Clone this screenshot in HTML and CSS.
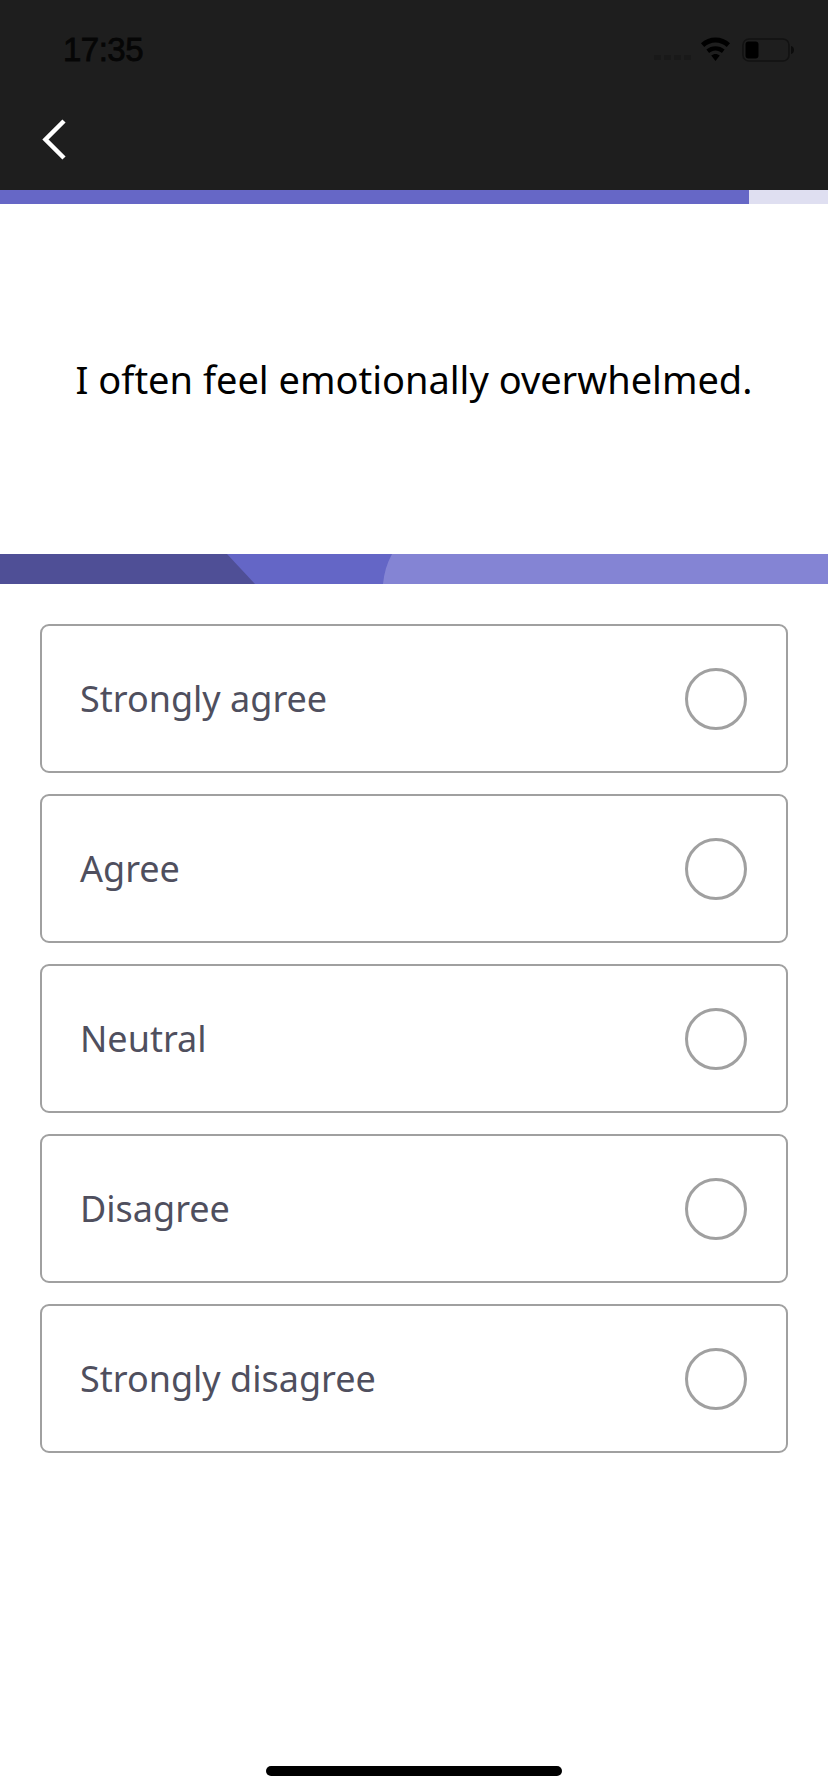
FILE: index.html
```html
<!DOCTYPE html>
<html lang="en">
<head>
<meta charset="utf-8">
<title>Question</title>
<link rel="stylesheet" href="styles.css">
</head>
<body>
<div class="page">
  <header class="header">
    <div class="status">
      <span class="time">17:35</span>
      <div class="status-icons">
        <div class="signal"><i></i><i></i><i></i><i></i></div>
        <svg class="wifi" width="31" height="24" viewBox="0 0 32 24" preserveAspectRatio="none"><path d="M16 24 L11.6 18.6 C14 16.4 18 16.4 20.4 18.6 Z M9.4 16 L6.6 12.6 C11.6 8 20.4 8 25.4 12.6 L22.6 16 C18.8 12.6 13.2 12.6 9.4 16 Z M4.4 10 L1 6.2 C9 -1.4 23 -1.4 31 6.2 L27.6 10 C21 4 11 4 4.4 10 Z" fill="#000"/></svg>
        <svg class="battery" width="52" height="24" viewBox="0 0 52 24"><rect x="1" y="1" width="46" height="22" rx="6" fill="none" stroke="#121212" stroke-width="1.6"/><rect x="3.5" y="3.5" width="13" height="17" rx="3" fill="#000"/><path d="M49 8 C51 8.6 52 10 52 12 C52 14 51 15.4 49 16 Z" fill="#0c0c0c"/></svg>
      </div>
    </div>
    <div class="nav">
      <svg class="back" width="26" height="42" viewBox="0 0 26 42"><path d="M22 2 L3.5 20.5 L22 39" fill="none" stroke="#fff" stroke-width="4.5"/></svg>
    </div>
  </header>
  <div class="progress"><div class="progress-fill"></div></div>
  <section class="question">
    <p class="question-text">I often feel emotionally overwhelmed.</p>
  </section>
  <svg class="band" width="828" height="30" viewBox="0 0 828 30" preserveAspectRatio="none">
    <rect width="828" height="30" fill="#8484d4"/>
    <path d="M0 0 H392 C387 9 384 19 383 30 H0 Z" fill="#6466c6"/>
    <path d="M0 0 H227 L255 30 H0 Z" fill="#4f4f96"/>
  </svg>
  <main class="options">
    <div class="option"><span class="label">Strongly agree</span><span class="radio"></span></div>
    <div class="option"><span class="label">Agree</span><span class="radio"></span></div>
    <div class="option"><span class="label">Neutral</span><span class="radio"></span></div>
    <div class="option"><span class="label">Disagree</span><span class="radio"></span></div>
    <div class="option"><span class="label">Strongly disagree</span><span class="radio"></span></div>
  </main>
  <div class="home-row"><div class="home-indicator"></div></div>
</div>
</body>
</html>
```
FILE: styles.css
```css
* { box-sizing: border-box; }
html, body { margin: 0; padding: 0; background: #fff; }
.page {
  width: 828px;
  height: 1792px;
  display: flex;
  flex-direction: column;
  font-family: "Noto Sans", sans-serif;
  overflow: hidden;
}
.header {
  height: 190px;
  background: #1e1e1e;
  display: flex;
  flex-direction: column;
}
.status {
  height: 100px;
  padding: 28px 34px 0 63px;
  display: flex;
  justify-content: space-between;
  align-items: flex-start;
}
.time {
  font-family: "Liberation Sans", sans-serif;
  font-size: 33px;
  letter-spacing: -0.5px;
  line-height: 44px;
  color: #060606;
  -webkit-text-stroke: 0.8px #060606;
}
.status-icons {
  display: flex;
  align-items: flex-start;
  padding-top: 9px;
}
.signal {
  display: flex;
  gap: 3px;
  margin-top: 18px;
  margin-right: 9px;
}
.signal i { width: 7px; height: 5px; background: #191919; border-radius: 1px; display: block; }
.wifi { margin-right: 11px; }
.battery { margin-top: 1px; }
.nav { padding: 19px 0 0 42px; }
.back { display: block; }
.progress { height: 14px; background: #dfdff1; }
.progress-fill { width: 749px; height: 100%; background: #6667c6; }
.question {
  height: 350px;
  display: flex;
  align-items: center;
  justify-content: center;
}
.question-text {
  margin: 0;
  font-size: 38px;
  line-height: 52px;
  color: #000;
  text-align: center;
}
.band { display: block; flex: none; }
.options {
  padding: 40px 40px 0 40px;
  display: flex;
  flex-direction: column;
  gap: 21px;
}
.option {
  height: 149px;
  border: 2px solid #a0a0a0;
  border-radius: 9px;
  padding: 0 39px 0 38px;
  display: flex;
  align-items: center;
  justify-content: space-between;
}
.label {
  font-size: 36px;
  color: #4f4f5e;
}
.radio {
  width: 62px;
  height: 62px;
  border: 3px solid #a0a0a0;
  border-radius: 50%;
}
.home-row {
  margin-top: auto;
  padding-bottom: 16px;
  display: flex;
  justify-content: center;
}
.home-indicator {
  width: 296px;
  height: 10px;
  background: #000;
  border-radius: 5px;
}
```
